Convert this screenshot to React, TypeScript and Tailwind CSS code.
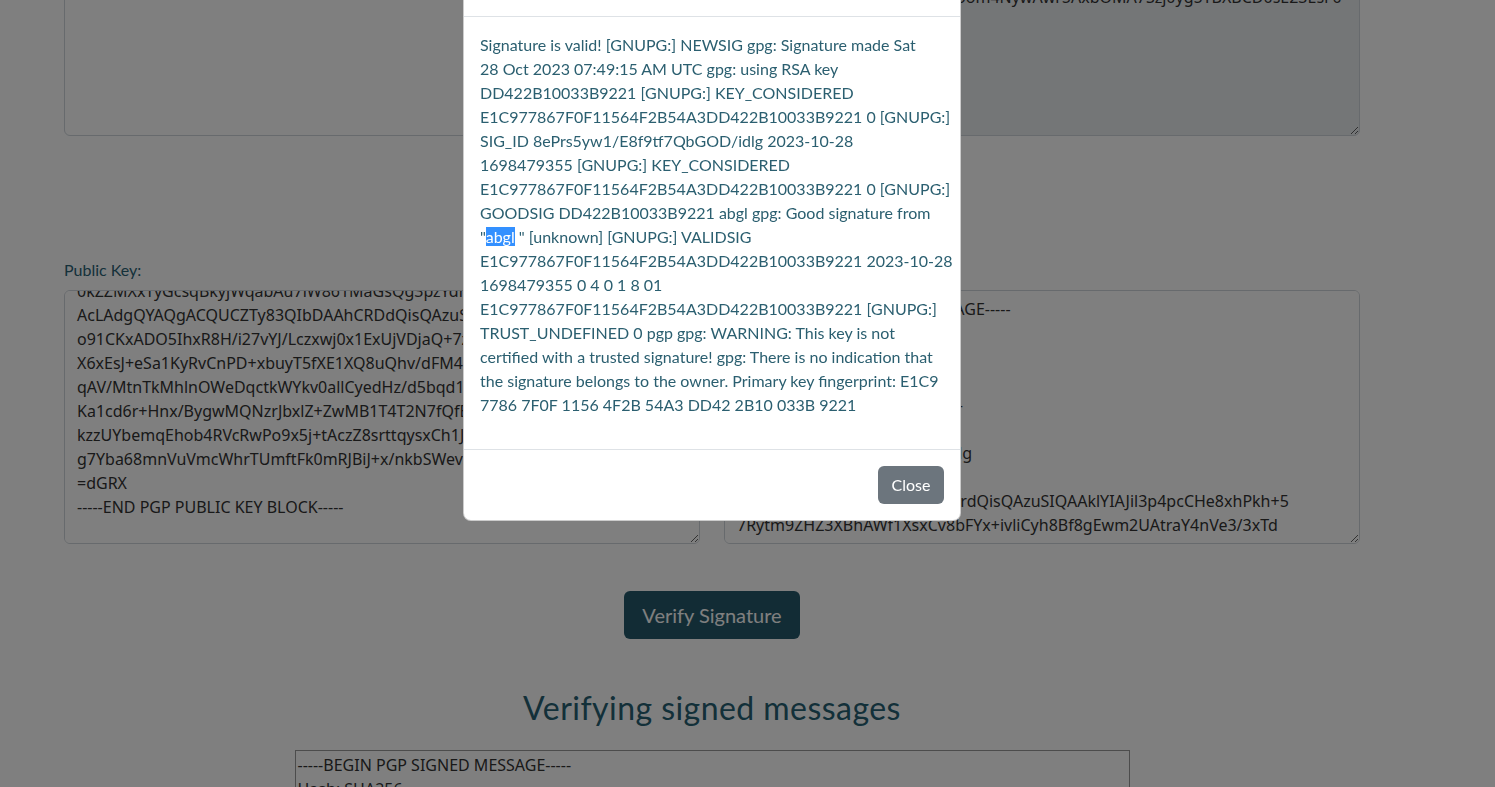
import { useEffect, useRef } from 'react';

const publicKeyLines = [
  '-----BEGIN PGP PUBLIC KEY BLOCK-----',
  '',
  'mQENBGU8vN0BCACxq3Wm2pV0Rk8f7yTnX1cJd4hLsA9bQe6uGzKoE5rYvN2MiPtD',
  'h7c1XnZqR8sLwF3eVbY0oJpU4kGdT6iAmQ9yE2lHxC5zWvS1fBnKu8OaRt7gDjMq',
  'N3sPbV6eXcY9wL2hF0kT8rZuA1mJiQ5dGoE7yCnK4tRxBvS3lWqH6fUaM9zOpDgI',
  'tAtQWJnbCA8YWJnbEBleGFtcGxlLmNvbT6JAU4EEwEIADgWIQThyZeGfw8RVk8r',
  '0kZZMXxTyGcsqBkyjWqabAu7lW861MaGsQg3pzYdrIuV7hE2oPmcKw9sT4aNfXbR',
  'AcLAdgQYAQgACQUCZTy83QIbDAAhCRDdQisQAzuSIQAAklYIAJil3p4pcCHe8xhP',
  'o91CKxADO5IhxR8H/i27vYJ/Lczxwj0x1ExUjVDjaQ+7zTm4WnLqF2cRbK8yHvUd',
  'X6xEsJ+eSa1KyRvCnPD+xbuyT5fXE1XQ8uQhv/dFM4pGk0sNwZ7jLcAe3tYiRmOq',
  'qAV/MtnTkMhlnOWeDqctkWYkv0allCyedHz/d5bqd10Ej6ZpXgUr2Ns8FwLcKyTb',
  'Ka1cd6r+Hnx/BygwMQNzrJbxlZ+ZwMB1T4T2N7fQfEoV9sPiYa3GuLmKd5hWtCeR',
  'kzzUYbemqEhob4RVcRwPo9x5j+tAczZ8srttqysxCh1JvN2dG6oQfLpXi0UaMkSe',
  'g7Yba68mnVuVmcWhrTUmftFk0mRJBiJ+x/nkbSWev3yQ=',
  '=dGRX',
  '-----END PGP PUBLIC KEY BLOCK-----',
];

const signedMessage = [
  '-----BEGIN PGP SIGNED MESSAGE-----',
  'Hash: SHA256',
  '',
  'hello world',
  '-----BEGIN PGP SIGNATURE-----',
  '',
  'wsBzBAEBCAAnBYJlPLzQCZDdg',
  '',
  'iQEzBAEBCAAdFiEE4cmXhn8PrdQisQAzuSIQAAklYIAJil3p4pcCHe8xhPkh+5',
  '7Rytm9ZHZ3XBhAWf1XsxCv8bFYx+ivliCyh8Bf8gEwm2UAtraY4nVe3/3xTd',
  'Lk4R0pWmZs8yQvE2bN7cTfHd1aGxJ6oU9rKiP3eYwS5lMnBzX0qCtVj',
  '=Xk2f',
  '-----END PGP SIGNATURE-----',
].join('\n');

const signatureOutput = [
  'iQEzBAEBCAAdFiEE4cmXhn8PEVZPK1Sj3UIrEAM7kiEFAmU8vNAACgkQ3UIrEAM7',
  'kiEFdQisQAzuSIQAAklYIAJil3p4pcCHe8xhPkh+57Rytm9ZHZ3XBhAWf1XsxCv8',
  'bFYx+ivliCyh8Bf8gEwm2UAtraY4nVe3/3xTdLk4R0pWmZs8yQvE2bN7cTfHd1aG',
  'xJ6oU9rKiP3eYwS5lMnBzX0qCtVjHq7sZ1uWd4yKgTfPnRc2bEaLm0oQiXvJ8Ns5',
  'AbtS8wXqRmR1hWLE0NGu2Ioom4NywAwr5AxbOMA7Szj0yg5TBXBCD0sE23EsF0k',
  '=Xk2f',
].join('\n');

// the result text as it wraps in the dialog
const resultLines: React.ReactNode[] = [
  'Signature is valid! [GNUPG:] NEWSIG gpg: Signature made Sat',
  '28 Oct 2023 07:49:15 AM UTC gpg: using RSA key',
  'DD422B10033B9221 [GNUPG:] KEY_CONSIDERED',
  'E1C977867F0F11564F2B54A3DD422B10033B9221 0 [GNUPG:]',
  'SIG_ID 8ePrs5yw1/E8f9tf7QbGOD/idlg 2023-10-28',
  '1698479355 [GNUPG:] KEY_CONSIDERED',
  'E1C977867F0F11564F2B54A3DD422B10033B9221 0 [GNUPG:]',
  'GOODSIG DD422B10033B9221 abgl gpg: Good signature from',
  <>
    "<span className="bg-[#3390ff] text-white">abgl</span> " [unknown] [GNUPG:] VALIDSIG
  </>,
  'E1C977867F0F11564F2B54A3DD422B10033B9221 2023-10-28',
  '1698479355 0 4 0 1 8 01',
  'E1C977867F0F11564F2B54A3DD422B10033B9221 [GNUPG:]',
  'TRUST_UNDEFINED 0 pgp gpg: WARNING: This key is not',
  'certified with a trusted signature! gpg: There is no indication that',
  'the signature belongs to the owner. Primary key fingerprint: E1C9',
  '7786 7F0F 1156 4F2B 54A3 DD42 2B10 033B 9221',
];

const inputClass =
  "block w-full h-[254px] resize-y rounded-md border border-[#ced4da] px-3 py-1.5 text-base leading-6 text-[#333] font-['Noto_Sans',sans-serif] [scrollbar-width:none] outline-none";

export default function App() {
  const keyRef = useRef<HTMLTextAreaElement>(null);

  useEffect(() => {
    // keep the key field scrolled down to its END line, the way it was left
    const el = keyRef.current;
    if (!el) return;
    const endIndex = publicKeyLines.length - 1;
    el.scrollTop = 24 * endIndex - 198;
  }, []);

  return (
    <div className="relative h-[787px] w-full overflow-hidden bg-white font-['Lato',sans-serif]">
      <div className="w-[1424px] px-16 -mt-[118px]">
        <div className="grid grid-cols-2 gap-6">
          <textarea className={inputClass + ' bg-white'} defaultValue="" />
          <textarea className={inputClass + ' bg-[#e9ecef]'} readOnly defaultValue={signatureOutput} />
        </div>

        <div className="mt-[122px] grid grid-cols-2 gap-6">
          <div>
            <label className="block mb-2 text-base leading-6 text-[#2a6275]">Public Key:</label>
            <textarea
              ref={keyRef}
              wrap="off"
              className={inputClass + ' bg-white'}
              defaultValue={publicKeyLines.join('\n') + '\n'}
            />
          </div>
          <div>
            <label className="block mb-2 text-base leading-6 text-[#2a6275]">Signed Message:</label>
            <textarea wrap="off" className={inputClass + ' bg-white'} defaultValue={signedMessage} />
          </div>
        </div>

        <div className="mt-[47px] flex justify-center">
          <button className="h-12 w-[176px] rounded-md bg-[#24596b] text-xl text-white">Verify Signature</button>
        </div>

        <h2 className="mt-[50px] text-center text-[32px] leading-[38px] tracking-[0.014em] text-[#266073]">
          Verifying signed messages
        </h2>

        <div className="mt-[23px] flex justify-center">
          <textarea
            wrap="off"
            className="block w-[835px] h-[200px] border border-[#999] px-0.5 py-0.5 text-base leading-6 text-[#333] font-['Noto_Sans',sans-serif] [scrollbar-width:none] outline-none"
            defaultValue={'-----BEGIN PGP SIGNED MESSAGE-----\nHash: SHA256\n\nhello world\n-----BEGIN PGP SIGNATURE-----'}
          />
        </div>
      </div>

      {/* backdrop */}
      <div className="fixed inset-0 bg-black/50" />

      {/* modal */}
      <div className="fixed left-0 top-[-47px] flex w-[1424px] justify-center">
        <div className="w-[498px] rounded-lg border border-black/20 bg-white text-[#2b5f70]">
          <div className="flex h-[63px] items-start justify-between border-b border-[#dee2e6] px-4 pt-[12px]">
            <h5 className="text-xl leading-[30px]">Verification Result</h5>
            <button className="text-xl leading-[30px] text-black/50" aria-label="Close">×</button>
          </div>
          <div className="p-4">
            <p className="mb-4 text-base leading-6">
              {resultLines.map((line, i) => (
                <span key={i} className="block whitespace-nowrap">
                  {line}
                </span>
              ))}
            </p>
          </div>
          <div className="flex justify-end border-t border-[#dee2e6] p-3">
            <button className="m-1 h-[38px] w-[66px] rounded-md bg-[#6c757d] text-base text-white">Close</button>
          </div>
        </div>
      </div>
    </div>
  );
}
